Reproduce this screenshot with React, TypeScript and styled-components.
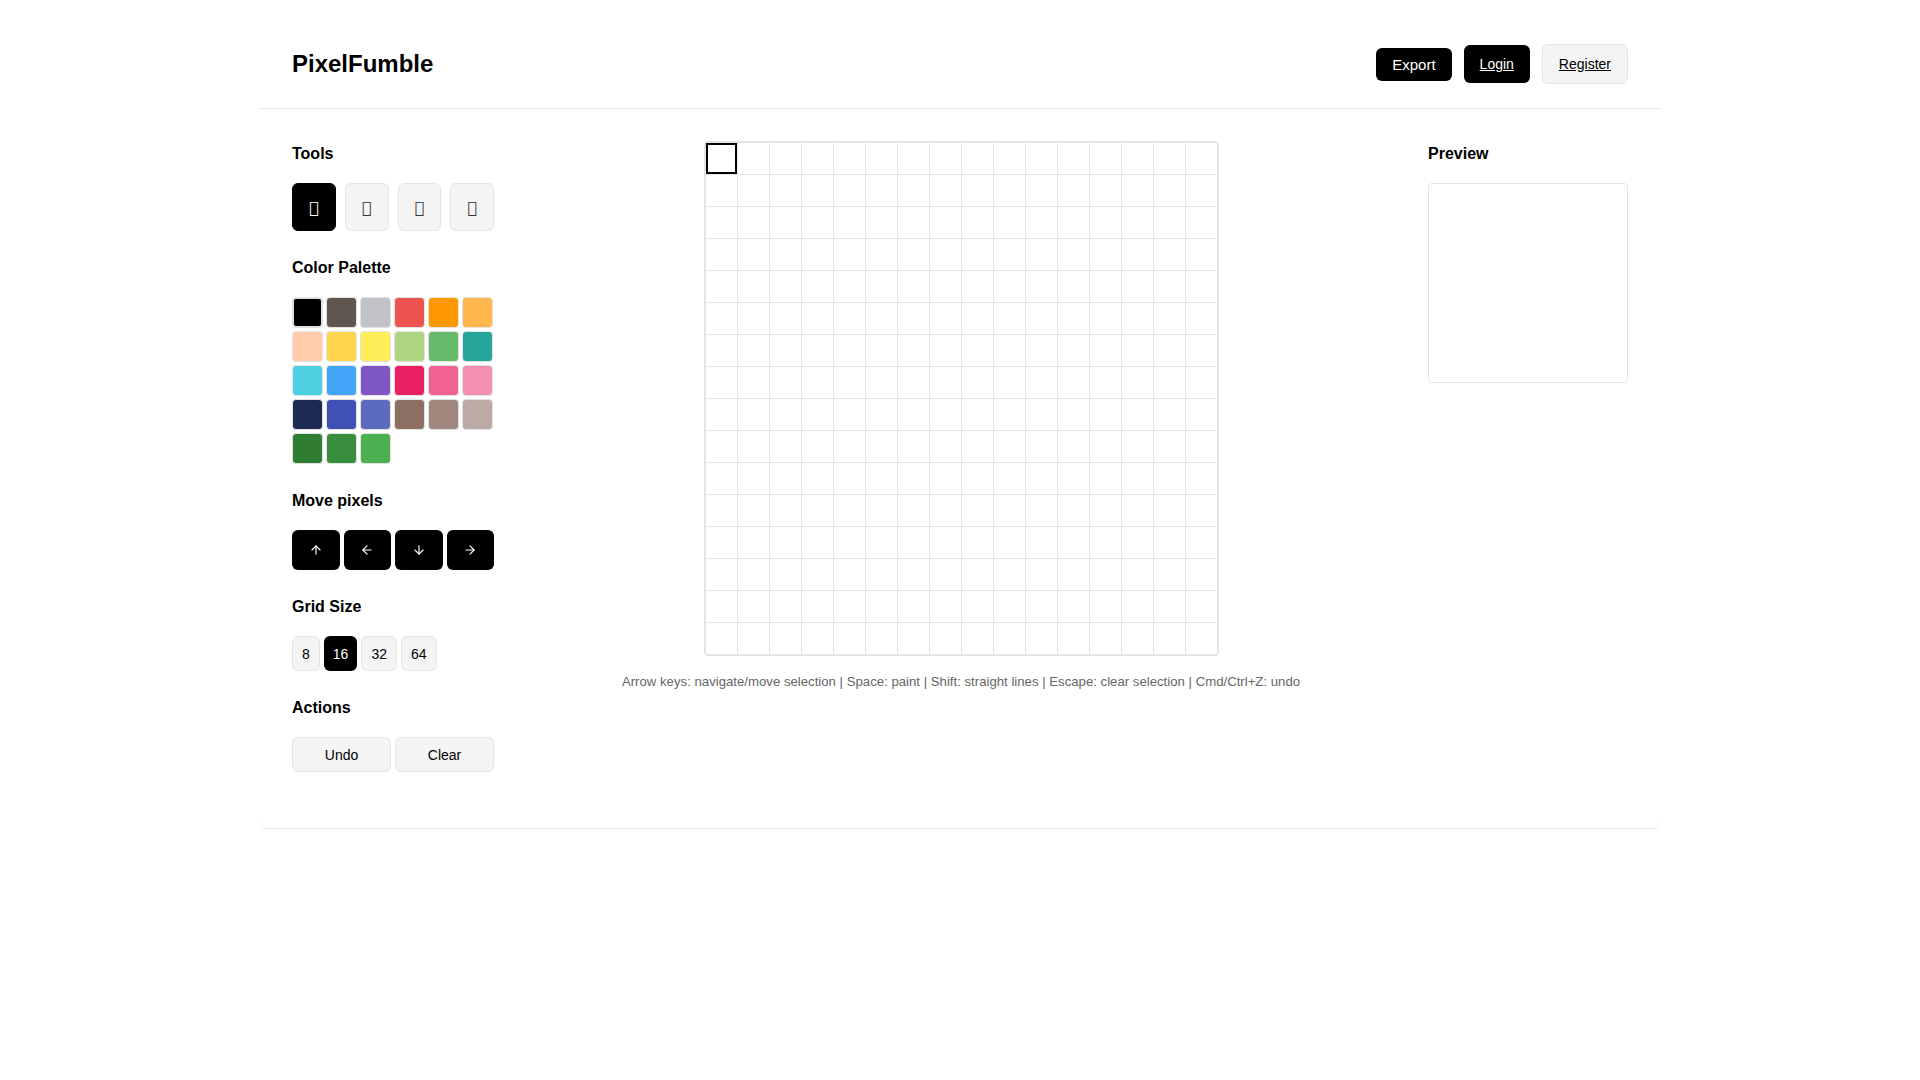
import { createGlobalStyle, styled } from "styled-components";
import { ArrowDown, ArrowLeft, ArrowRight, ArrowUp } from "lucide-react";

const GlobalStyle = createGlobalStyle`
  body {
    margin: 0;
    background: #fff;
    color: #000;
    font-family: "Liberation Sans", Arial, sans-serif;
  }
`;

const palette = [
  "#000000", "#5f574f", "#c2c3c7", "#ef5350", "#ff9800", "#ffb74d",
  "#ffccaa", "#ffd54f", "#ffee58", "#aed581", "#66bb6a", "#26a69a",
  "#4dd0e1", "#42a5f5", "#7e57c2", "#e91e63", "#f06292", "#f48fb1",
  "#1d2b53", "#3f51b5", "#5c6bc0", "#8d6e63", "#a1887f", "#bcaaa4",
  "#2e7d32", "#388e3c", "#4caf50",
];

// icon font glyphs (the icon font is not available, so they show as boxes)
const tools = ["\uf1fc", "\uf12d", "\uf576", "\uf1b2"];
const moves = [
  { label: "up", Icon: ArrowUp },
  { label: "left", Icon: ArrowLeft },
  { label: "down", Icon: ArrowDown },
  { label: "right", Icon: ArrowRight },
];
const sizes = [8, 16, 32, 64];
const GRID = 16;

const App = () => {
  const cells = Array.from({ length: GRID * GRID }, (_, i) => i);

  return (
    <>
      <GlobalStyle />
      <Shell>
        <Header>
          <Logo>PixelFumble</Logo>
          <HeaderActions>
            <ExportButton>Export</ExportButton>
            <LoginLink href="#">Login</LoginLink>
            <RegisterLink href="#">Register</RegisterLink>
          </HeaderActions>
        </Header>

        <Main>
          <Sidebar>
            <Section>
              <Heading>Tools</Heading>
              <Row $gap={9}>
                {tools.map((t, i) => (
                  <ToolButton key={t} $active={i === 0}>
                    {t}
                  </ToolButton>
                ))}
              </Row>
            </Section>

            <Section>
              <Heading>Color Palette</Heading>
              <Palette>
                {palette.map((c, i) => (
                  <Swatch key={c} $color={c} $selected={i === 0} />
                ))}
              </Palette>
            </Section>

            <Section>
              <Heading>Move pixels</Heading>
              <Row $gap={4}>
                {moves.map(({ label, Icon }) => (
                  <MoveButton key={label} aria-label={label}>
                    <Icon size={14} strokeWidth={2} />
                  </MoveButton>
                ))}
              </Row>
            </Section>

            <Section>
              <Heading>Grid Size</Heading>
              <Row $gap={4}>
                {sizes.map((s) => (
                  <SizeButton key={s} $active={s === GRID}>
                    {s}
                  </SizeButton>
                ))}
              </Row>
            </Section>

            <Section>
              <Heading>Actions</Heading>
              <Row $gap={4}>
                <ActionButton>Undo</ActionButton>
                <ActionButton>Clear</ActionButton>
              </Row>
            </Section>
          </Sidebar>

          <CanvasColumn>
            <Canvas>
              {cells.map((i) => (
                <Cell key={i} $cursor={i === 0} />
              ))}
            </Canvas>
            <Hint>
              Arrow keys: navigate/move selection | Space: paint | Shift: straight lines | Escape: clear
              selection | Cmd/Ctrl+Z: undo
            </Hint>
          </CanvasColumn>

          <PreviewColumn>
            <Heading>Preview</Heading>
            <PreviewBox />
          </PreviewColumn>
        </Main>
      </Shell>
    </>
  );
};

export default App;

const Shell = styled.div`
  max-width: 1400px;
  margin: 24px auto;
  border-bottom: 1px solid #e5e5e5;
  border-radius: 8px;
  background: #fff;
`;

const Header = styled.header`
  display: flex;
  align-items: center;
  justify-content: space-between;
  padding: 20px 32px 24px;
  border-bottom: 1px solid #e5e5e5;
`;

const Logo = styled.h1`
  margin: 0;
  font-size: 24px;
  font-weight: 700;
  line-height: 28px;
`;

const HeaderActions = styled.div`
  display: flex;
  align-items: center;
  gap: 12px;
`;

const ExportButton = styled.button`
  height: 33px;
  padding: 0 16px;
  border: none;
  border-radius: 6px;
  background: #000;
  color: #fff;
  font-family: "Liberation Sans", Arial, sans-serif;
  font-size: 15px;
  cursor: pointer;
`;

const LoginLink = styled.a`
  padding: 11px 16px;
  border-radius: 6px;
  background: #000;
  color: #fff;
  font-size: 14px;
  line-height: 16px;
  text-decoration: underline;
`;

const RegisterLink = styled.a`
  padding: 11px 16px;
  border: 1px solid #e5e5e5;
  border-radius: 6px;
  background: #f4f4f4;
  color: #000;
  font-size: 14px;
  line-height: 16px;
  text-decoration: underline;
`;

const Main = styled.main`
  display: grid;
  grid-template-columns: 202px 1fr 200px;
  align-items: start;
  padding: 32px 32px 56px;
`;

const Sidebar = styled.aside`
  display: flex;
  flex-direction: column;
  gap: 24px;
`;

const Section = styled.section`
  display: flex;
  flex-direction: column;
`;

const Heading = styled.h3`
  margin: 1px 0 17px;
  font-size: 16px;
  font-weight: 700;
  line-height: 24px;
`;

const Row = styled.div<{ $gap: number }>`
  display: flex;
  gap: ${(p) => p.$gap}px;
`;

const BaseButton = styled.button`
  display: flex;
  align-items: center;
  justify-content: center;
  box-sizing: border-box;
  border-radius: 6px;
  font-family: "Liberation Sans", Arial, sans-serif;
  font-size: 14px;
  cursor: pointer;
`;

const ToolButton = styled(BaseButton)<{ $active?: boolean }>`
  width: 44px;
  height: 48px;
  padding: 0;
  border: 1px solid ${(p) => (p.$active ? "#000" : "#e5e5e5")};
  background: ${(p) => (p.$active ? "#000" : "#f4f4f4")};
  color: ${(p) => (p.$active ? "#fff" : "#333")};
  font-family: "DejaVu Sans", sans-serif;
  font-size: 16px;
`;

const Palette = styled.div`
  display: grid;
  grid-template-columns: repeat(6, 31px);
  gap: 3px;
`;

const Swatch = styled.button<{ $color: string; $selected?: boolean }>`
  box-sizing: border-box;
  width: 31px;
  height: 31px;
  padding: 0;
  border: ${(p) => (p.$selected ? "2px solid #e0e0e0" : "1px solid #e2e2e2")};
  border-radius: 4px;
  background: ${(p) => p.$color};
  cursor: pointer;
`;

const MoveButton = styled(BaseButton)`
  flex: 1;
  height: 40px;
  padding: 0;
  border: none;
  background: #000;
  color: #fff;
`;

const SizeButton = styled(BaseButton)<{ $active?: boolean }>`
  height: 35px;
  padding: 0 9px;
  border: ${(p) => (p.$active ? "none" : "1px solid #e5e5e5")};
  background: ${(p) => (p.$active ? "#000" : "#f4f4f4")};
  color: ${(p) => (p.$active ? "#fff" : "#000")};
`;

const ActionButton = styled(BaseButton)`
  flex: 1;
  height: 35px;
  padding: 0;
  border: 1px solid #e5e5e5;
  background: #f4f4f4;
  color: #000;
`;

const CanvasColumn = styled.div`
  display: flex;
  flex-direction: column;
  align-items: center;
`;

const Canvas = styled.div`
  display: grid;
  grid-template-columns: repeat(${GRID}, 31px);
  gap: 1px;
  padding: 1px;
  border: 1px solid #e2e2e2;
  border-radius: 4px;
  background: #e6e6e6;
`;

const Cell = styled.div<{ $cursor?: boolean }>`
  width: 31px;
  height: 31px;
  background: #fff;
  box-shadow: ${(p) => (p.$cursor ? "0 0 0 2px #000 inset" : "none")};
`;

const Hint = styled.p`
  margin: 18px 0 0;
  color: #666;
  font-size: 13.2px;
  line-height: 15px;
`;

const PreviewColumn = styled.div`
  display: flex;
  flex-direction: column;
`;

const PreviewBox = styled.div`
  width: 200px;
  height: 200px;
  box-sizing: border-box;
  border: 1px solid #e5e5e5;
  border-radius: 4px;
  background: #fff;
`;
